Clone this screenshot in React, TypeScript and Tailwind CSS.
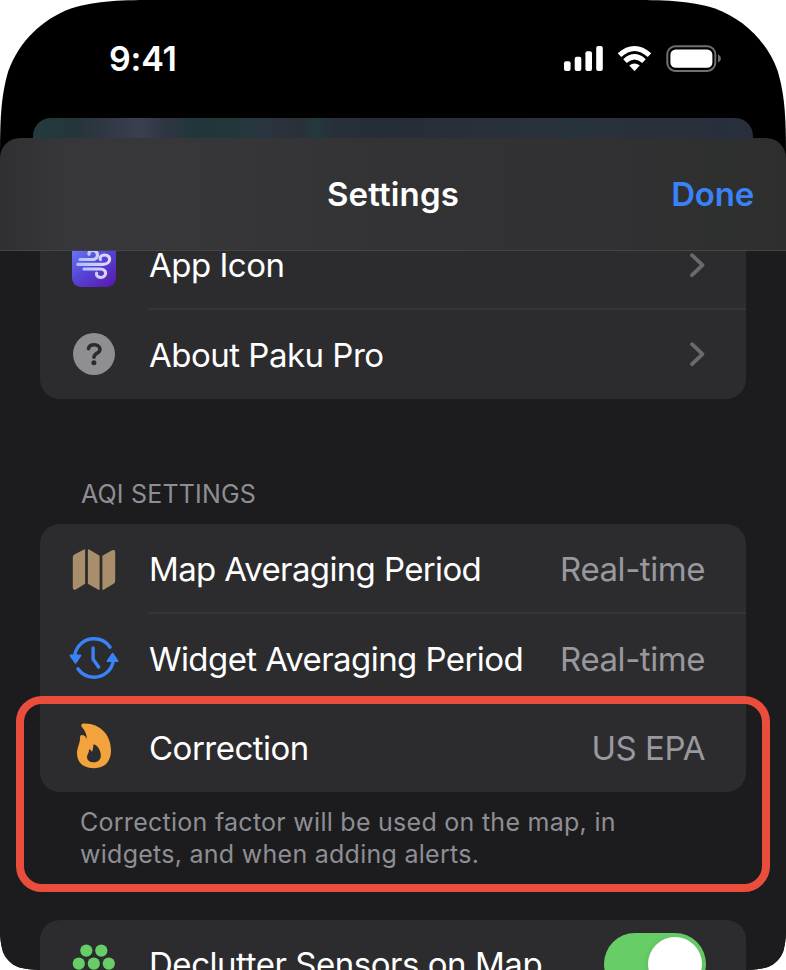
import React from "react";

const Chevron = () => (
  <svg className="relative top-px" width="18" height="28" viewBox="0 0 18 28" fill="none" stroke="#6a6a6e" strokeWidth="3.8" strokeLinecap="round" strokeLinejoin="round">
    <path d="M4 4.2 14.5 14.2 4 24.2" />
  </svg>
);

const AppIcon = () => (
  <svg width="44" height="44" viewBox="0 0 44 44" fill="none">
    <defs>
      <linearGradient id="appBg" x1="4" y1="0" x2="38" y2="44" gradientUnits="userSpaceOnUse">
        <stop offset="0" stopColor="#6b7cfb" />
        <stop offset="0.5" stopColor="#5646d6" />
        <stop offset="1" stopColor="#581bb0" />
      </linearGradient>
      <linearGradient id="wind" x1="4" y1="0" x2="40" y2="0" gradientUnits="userSpaceOnUse">
        <stop offset="0" stopColor="#a9c0fb" />
        <stop offset="1" stopColor="#e2dafa" />
      </linearGradient>
    </defs>
    <rect width="44" height="44" rx="9" fill="url(#appBg)" />
    <g stroke="url(#wind)" strokeWidth="3.2" strokeLinecap="round">
      <path d="M8 16.5H20.5C27 16.5 27 7.4 20.8 7.4C18 7.4 16.6 9.4 17 11.1" />
      <path d="M5.8 21.3H31C39.5 21.3 39.5 12 32.5 12C29 12 27.5 14.5 28.3 16.5" />
      <path d="M12 26H28.5C35.5 26 35 34.5 28.6 34.5C25.5 34.5 24 32.2 24.6 30.2" />
    </g>
  </svg>
);

const Question = () => (
  <div className="flex h-[42px] w-[42px] items-center justify-center rounded-full bg-[#8e8e93]">
    <svg width="42" height="42" viewBox="0 0 42 42" fill="none">
      <path d="M15.5 15.6C16 13 18.2 11.8 21.2 11.8C24.6 11.8 26.9 13.6 26.9 16.4C26.9 20.4 21 20.3 21 24.2" stroke="#2c2c2e" strokeWidth="3.6" strokeLinecap="round" strokeLinejoin="round" />
      <circle cx="20.9" cy="29.7" r="2.5" fill="#2c2c2e" />
    </svg>
  </div>
);

const MapIcon = () => (
  <svg className="relative top-px" width="44" height="42" viewBox="0 0 44 42" fill="#a98e6c" stroke="#a98e6c" strokeWidth="1.6" strokeLinejoin="round">
    <path d="M1.6 8.3Q1.6 7 2.8 6.3L12.3 1.1V34.4L3.4 39.7Q1.6 40.3 1.6 38.6Z" />
    <path d="M16.7 1.1 26.8 7.2V40.1L16.7 34.4Z" />
    <path d="M31.2 7.2 40.5 1.9Q42.4 1.2 42.4 3.1V32Q42.4 33.3 41.2 34L31.2 40.1Z" />
  </svg>
);

const ClockIcon = () => (
  <svg width="50" height="44" viewBox="0 0 50 44" fill="none" stroke="#3a82f7" strokeWidth="3.4" strokeLinecap="round" strokeLinejoin="round">
    <path d="M5.6 20C6.8 10 14.8 2.8 25 2.8C31.8 2.8 37.6 6.1 41.1 11.2" />
    <path d="M44.4 24C43.2 34 35.2 41.2 25 41.2C18.2 41.2 12.4 37.9 8.9 32.8" />
    <path d="M24.1 12V23.3L29.6 31" />
    <path d="M1.5 19.5H11.4L6.5 26.6Z" fill="#3a82f7" strokeWidth="2" />
    <path d="M38.6 25H48.5L43.6 17.9Z" fill="#3a82f7" strokeWidth="2" />
  </svg>
);

const FlameIcon = () => (
  <svg className="relative -top-px" width="36" height="46" viewBox="0 0 36 46" fill="#f2a33c">
    <path fillRule="evenodd" d="M7.4 .6C23.5-.2 35 11.5 35 27.5C35 38.8 28.3 45.2 18 45.2C7.5 45.2 1 39.5 1 30.2C1 24.2 4.1 20.8 4.1 14.6C4.1 12.8 4.7 12.1 5.8 12.1C7.9 12.1 9.8 13.4 10.7 15.9C11 13.2 9.8 8.4 5.6 3.5C4.7 2.3 5.7.8 7.4.6ZM18 21.2C17.3 21.3 17.4 22 17.3 23.2C17.1 25 16.8 26.8 15.9 29C15.4 27.6 14.8 26.7 13.8 26.4C13 26.2 13.1 27 12.9 28.2C12.5 30.7 11 31.5 11 34C11 37.1 13.5 39.3 17.9 39.3C22 39.3 24.8 36.9 24.8 32.5C24.8 27.5 22 23 18 21.2Z" />
  </svg>
);

const DotsIcon = () => (
  <svg className="relative top-px" width="44" height="42" viewBox="0 0 44 42" fill="#67ce67">
    <circle cx="14.3" cy="6.6" r="6.1" />
    <circle cx="29.3" cy="6.6" r="6.1" />
    <circle cx="6.8" cy="19.6" r="6.1" />
    <circle cx="21.8" cy="19.6" r="6.1" />
    <circle cx="36.8" cy="19.6" r="6.1" />
    <circle cx="14.3" cy="32.6" r="6.1" />
    <circle cx="29.3" cy="32.6" r="6.1" />
  </svg>
);

type RowProps = {
  icon: React.ReactNode;
  label: string;
  labelClass: string;
  trailing: React.ReactNode;
  divider?: boolean;
  height?: string;
};

const Row = ({ icon, label, labelClass, trailing, divider, height = "h-[89.3px]" }: RowProps) => (
  <div className={`flex shrink-0 ${height}`}>
    <div className="flex w-[108px] shrink-0 items-center justify-center">{icon}</div>
    <div className={`flex flex-1 items-center justify-between whitespace-nowrap pr-10 ${divider ? "border-b-2 border-[#353537]" : "pb-0.5"}`}>
      <span className={`text-[33px] text-white ${labelClass}`}>{label}</span>
      {trailing}
    </div>
  </div>
);

const Value = ({ children }: { children: string }) => (
  <span className="pr-px pt-[5px] text-[33px] tracking-[-0.45px] text-[#98989e]">{children}</span>
);

export default function App() {
  return (
    <div className="h-[970px] w-[786px] overflow-hidden bg-white font-['Inter',sans-serif]">
      <div className="relative flex h-full flex-col overflow-hidden bg-black [clip-path:path('M160_0C122_0_97_0.5_71_8.4C42.2_18.9_18.9_41.7_8.4_70.7C0.5_97_0_122_0_160L0_927C0_939_1_945_3_952C6_959_11_964_18_967C25_969_32_970_44_970L742_970C754_970_761_969_768_967C775_964_780_959_783_952C785_945_786_939_786_927L786_160C786_122_785.5_97_777.6_70.7C767_41.7_743.8_18.9_715_8.4C689_0.5_664_0_626_0Z')]">
        <header className="flex h-[118px] shrink-0 items-start justify-between pl-[109px] pr-[65px] pt-[38px]">
          <span className="text-[34px] font-semibold leading-[42px] tracking-[-0.2px] text-white">9:41</span>
          <svg className="mt-[6px]" width="158" height="30" viewBox="0 0 158 30" fill="white">
            <rect x="1" y="17.2" width="6.6" height="9.8" rx="2" />
            <rect x="11.7" y="12.7" width="6.6" height="14.3" rx="2" />
            <rect x="22.4" y="7.2" width="6.6" height="19.8" rx="2" />
            <rect x="33.2" y="2" width="6.6" height="25" rx="2" />
            <g fill="none" stroke="white" strokeWidth="5.2">
              <path d="M56.5 11.2C66.2 2.3 76.8 2.3 86.5 11.2" />
              <path d="M62 17.1C68.2 11.5 74.8 11.5 81 17.1" />
            </g>
            <path d="M66.2 21.5Q71.5 17.3 76.8 21.5L72.1 26.4Q71.5 27 70.9 26.4Z" />
            <rect x="104.3" y="2.3" width="48" height="24.6" rx="8" fill="none" stroke="#6f6f6f" strokeWidth="2" />
            <rect x="107.4" y="5.4" width="42" height="18.4" rx="5.3" />
            <path d="M155 10.6C158.8 12.2 158.8 17 155 18.6Z" fill="#6f6f6f" />
          </svg>
        </header>
        <div className="mx-[33px] h-5 shrink-0 rounded-t-[18px] bg-[linear-gradient(90deg,#243a3e_0%,#24363a_6%,#303744_10%,#3a4050_15%,#303543_18%,#21363a_22%,#24373b_29%,#2a3440_32%,#2a3037_37%,#23393c_39%,#272f3b_42%,#252d39_48%,#282f3a_60%,#28323d_75%,#292f3b_90%,#272f3d_100%)]" />
        <div className="flex h-[113px] shrink-0 items-center rounded-t-[20px] border-b border-[#454547] bg-[linear-gradient(90deg,#303032_0%,#37363a_8%,#373739_25%,#333335_48%,#313133_78%,#2d2e2d_100%)] px-8 text-[33px] leading-10">
          <span className="flex-1" />
          <span className="font-semibold tracking-[0.15px] text-white">Settings</span>
          <span className="flex-1 text-right font-semibold tracking-[-0.2px] text-[#3a82f7]">Done</span>
        </div>
        <main className="flex flex-1 flex-col overflow-hidden bg-[#1c1c1e] px-10">
          <section className="flex h-[147.5px] shrink-0 flex-col justify-end overflow-hidden rounded-b-[20px] bg-[#2c2c2e]">
            <Row icon={<AppIcon />} label="App Icon" labelClass="pl-px pt-[3px] tracking-[-0.5px]" divider trailing={<Chevron />} height="h-[88.7px]" />
            <Row icon={<Question />} label="About Paku Pro" labelClass="pl-px pt-[5px] tracking-[-0.5px]" trailing={<Chevron />} height="h-[88.7px]" />
          </section>
          <h2 className="mt-[79.5px] h-8 shrink-0 pl-[41px] text-[25px] leading-8 tracking-[0.18px] text-[#8e8e94]">AQI SETTINGS</h2>
          <section className="mt-[13.5px] h-[268px] shrink-0 overflow-hidden rounded-[20px] bg-[#2c2c2e]">
            <Row icon={<MapIcon />} label="Map Averaging Period" labelClass="pl-px pt-[5px] tracking-[-0.63px]" divider trailing={<Value>Real-time</Value>} height="h-[90px]" />
            <Row icon={<ClockIcon />} label="Widget Averaging Period" labelClass="pl-px pt-[5px] tracking-[-0.57px]" divider trailing={<Value>Real-time</Value>} />
            <Row icon={<FlameIcon />} label="Correction" labelClass="pl-px pt-[5px] tracking-[-0.5px]" trailing={<Value>US EPA</Value>} />
          </section>
          <p className="mt-[14.5px] h-16 shrink-0 whitespace-nowrap pl-10 text-[25px] leading-8 tracking-[0.27px] text-[#8e8e94]">
            Correction factor will be used on the map, in
            <br />
            widgets, and when adding alerts.
          </p>
          <section className="mt-[49.5px] h-[120px] shrink-0 overflow-hidden rounded-t-[20px] bg-[#2c2c2e]">
            <Row
              icon={<DotsIcon />}
              label="Declutter Sensors on Map"
              labelClass="pl-px pt-1 tracking-[-0.46px]"
              trailing={
                <div className="mt-px flex h-[62px] w-[102px] items-center justify-end rounded-full bg-[#67ce67] pr-1">
                  <div className="h-[54px] w-[54px] rounded-full bg-white shadow-[0_3px_9px_rgba(0,0,0,0.15)]" />
                </div>
              }
            />
          </section>
        </main>
        <div className="pointer-events-none absolute left-4 top-[696px] h-[196px] w-[754px] rounded-[26px] border-8 border-[#eb4d3d]" />
      </div>
    </div>
  );
}
